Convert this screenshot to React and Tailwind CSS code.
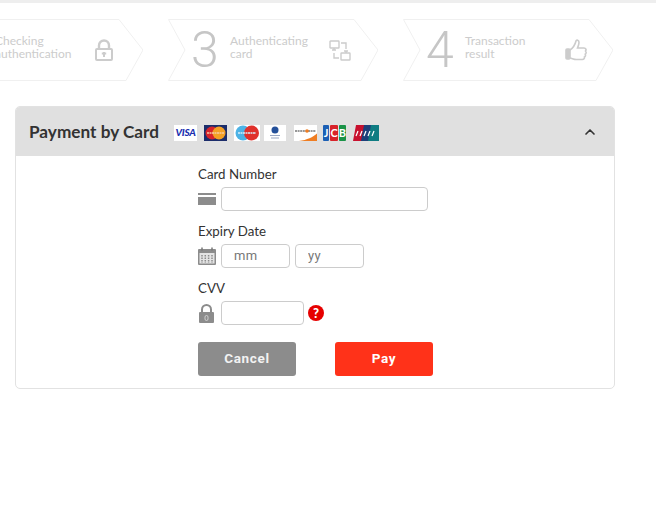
import React from 'react';
import { ChevronUp } from 'lucide-react';

const LockIcon = () => (
    <svg width="18" height="22" viewBox="0 0 18 22" fill="none">
        <path d="M4 10V6.500a5 5 0 0 1 10 0V10" stroke="#ccc" strokeWidth="2.400" />
        <rect x="1" y="10" width="16" height="11" rx="1" stroke="#ccc" strokeWidth="2" fill="#fff" />
        <path d="M9 13v5M6.800 14.600h4.400" stroke="#ccc" strokeWidth="2" />
    </svg>
);

const NodesIcon = () => (
    <svg className="mt-[2px] -ml-px" width="22" height="22" viewBox="0 0 22 22" fill="none" stroke="#ccc" strokeWidth="1.400">
        <rect x="1" y="1" width="9" height="7" rx="0.500" />
        <rect x="12" y="13" width="9" height="7" rx="0.500" />
        <path d="M5 8v2M3 10h4M17 13v-2M15 11h4" />
        <path d="M12 3h5v6M10 18H5v-5" />
    </svg>
);

const ThumbIcon = () => (
    <svg width="22" height="24" viewBox="0 0 22 24" fill="none" stroke="#ccc" strokeWidth="1.600">
        <rect x="1" y="11" width="4" height="10" rx="1" fill="#ccc" />
        <path d="M5 12c3-2 5-5 6-9 .4-1.500 3-1 3 1.500 0 2-1 4-1.500 5.500H19c2 0 2.500 2 1.500 3 1 1 .8 2.500-.3 3.200.6 1 .3 2.300-.8 2.800.3 1.500-.6 2.500-2 2.500h-6c-2.500 0-4-1-6.400-1.500" />
    </svg>
);

const steps = [
    { label: ['Checking', 'authentication'], icon: LockIcon },
    { num: '3', label: ['Authenticating', 'card'], icon: NodesIcon },
    { num: '4', label: ['Transaction', 'result'], icon: ThumbIcon },
];

const Step = ({ num, label, icon: Icon }) => (
    <div className="relative flex h-[62px] w-[210px] shrink-0 items-center">
        <svg className="absolute inset-0" width="210" height="62" viewBox="0 0 210 62" fill="none">
            <path d="M0.500 .5H186L210 31L193 61.500H.5L17 31Z" stroke="#f0f0f0" />
        </svg>
        <span className="relative h-[52px] w-[62px] pl-[23px] font-['Roboto',sans-serif] text-[50px] leading-[52px] font-light text-[#c6c6c6]">{num}</span>
        <div className="relative mb-[6px] w-[100px] text-xs leading-[13px] text-[#ccc]">
            {label.map((line) => (
                <div key={line}>{line}</div>
            ))}
        </div>
        <div className="relative">
            <Icon />
        </div>
    </div>
);

const LogoBox = ({ className, children }) => (
    <div className={`flex h-4 items-center justify-center overflow-hidden ${className}`}>{children}</div>
);

const cardLogos = (
    <div className="mt-[2px] ml-[15px] flex items-center">
        <LogoBox className="w-[23px] bg-white">
            <span className="text-[10px] font-black italic tracking-tight text-[#1a2fb0]">VISA</span>
        </LogoBox>
        <LogoBox className="ml-[7px] w-[23px] bg-[#1c2d6b]">
            <svg width="23" height="16" viewBox="0 0 23 16">
                <circle cx="8" cy="8" r="6.500" fill="#d8232a" />
                <circle cx="15" cy="8" r="6.500" fill="#f4a024" />
                <path d="M3 8h17" stroke="#f6c9a0" strokeWidth="1.500" strokeDasharray="2 .5" />
            </svg>
        </LogoBox>
        <LogoBox className="ml-[7px] w-[26px] bg-white">
            <svg width="26" height="16" viewBox="0 0 26 16">
                <circle cx="9" cy="8" r="7.500" fill="#4db3e6" />
                <circle cx="17.500" cy="8" r="7.500" fill="#e0312c" />
                <path d="M4 8h18" stroke="#d6eefa" strokeWidth="1.500" strokeDasharray="2 .5" />
            </svg>
        </LogoBox>
        <LogoBox className="ml-[4px] w-[22px] bg-white">
            <svg width="22" height="16" viewBox="0 0 22 16">
                <circle cx="11" cy="5" r="3.500" fill="#24509a" />
                <path d="M6 10.500h10M7 13h8" stroke="#9aa8c4" strokeWidth="1.200" />
            </svg>
        </LogoBox>
        <LogoBox className="ml-[8px] w-[23px] bg-white">
            <svg width="23" height="16" viewBox="0 0 23 16">
                <path d="M1 6h21" stroke="#777" strokeWidth="1.500" strokeDasharray="2 .6" />
                <circle cx="13" cy="6" r="1.800" fill="#ef7d22" />
                <path d="M5 16C13 15 19 12 23 8.500V16Z" fill="#ef7d22" />
            </svg>
        </LogoBox>
        <div className="ml-[6px] flex h-4 w-[23px] gap-px overflow-hidden text-center text-[11px] leading-4 font-bold text-white">
            <span className="flex-1 rounded-[1px] bg-[#1b5fb4]">J</span>
            <span className="flex-1 rounded-[1px] bg-[#d8232a]">C</span>
            <span className="flex-1 rounded-[1px] bg-[#1a9347]">B</span>
        </div>
        <LogoBox className="ml-[7px] w-[26px]">
            <svg width="26" height="16" viewBox="0 0 26 16">
                <path d="M3 0h9L9 16H0Z" fill="#c8102e" />
                <path d="M11 0h9l-3 16H8Z" fill="#1d3f7a" />
                <path d="M18 0h8v16h-11Z" fill="#0f7c82" />
                <path d="M3 11l2-5M7 11l2-5M11 11l2-5M15 11l2-5M19 11l2-5" stroke="#fff" strokeWidth="1.200" />
            </svg>
        </LogoBox>
    </div>
);

const inputClass = 'h-6 rounded-[4px] border border-[#ccc] bg-white pb-px pl-3 font-[\'Roboto\',sans-serif] text-[13px] tracking-wide text-[#777] outline-none placeholder:text-[#777]';

const Field = ({ label, icon, children }) => (
    <div>
        <div className="h-[19px] text-[13.300px] leading-[19px] text-[#333]">{label}</div>
        <div className="mt-[3px] flex h-6 items-center">
            <div className="flex w-[23px] shrink-0 items-center">{icon}</div>
            {children}
        </div>
    </div>
);

const App = () => (
    <div className="min-h-[523px] w-[656px] overflow-hidden bg-white font-['Lato',sans-serif]">
        <div className="h-[3px] bg-[#eee]" />

        <div className="mt-4 ml-[-67px] flex gap-[25px]">
            {steps.map((step) => (
                <Step key={step.label[0]} {...step} />
            ))}
        </div>

        <div className="mt-[25px] ml-[15px] w-[600px] overflow-hidden rounded-[5px] border border-[#e2e2e2]">
            <div className="flex h-[49px] items-center bg-[#e0e0e0] pr-4 pl-[13px]">
                <h2 className="text-[17.200px] font-bold text-[#333]">Payment by Card</h2>
                {cardLogos}
                <ChevronUp className="ml-auto h-4 w-4 text-[#333]" strokeWidth={2.500} />
            </div>

            <div className="h-[232px] pt-[9px] pl-[182px]">
                <div className="flex flex-col gap-[11px]">
                    <Field
                        label="Card Number"
                        icon={
                            <svg width="18" height="12" viewBox="0 0 18 12">
                                <rect y="0" width="18" height="2" fill="#8c8c8c" />
                                <rect y="4" width="18" height="8" fill="#8c8c8c" />
                            </svg>
                        }
                    >
                        <input className={`${inputClass} w-[207px]`} />
                    </Field>
                    <Field
                        label="Expiry Date"
                        icon={
                            <svg width="18" height="18" viewBox="0 0 18 18">
                                <rect y="2" width="18" height="16" rx="1" fill="#8c8c8c" />
                                <rect x="1.500" y="6" width="15" height="10.500" fill="#e4e4e4" />
                                <path d="M4 .5v3M14 .5v3" stroke="#777" strokeWidth="1.500" />
                                <path d="M4 8v8M7.300 8v8M10.600 8v8M14 8v8" stroke="#8c8c8c" strokeWidth="1.500" strokeDasharray="1.500 1" />
                            </svg>
                        }
                    >
                        <input className={`${inputClass} w-[69px]`} placeholder="mm" />
                        <input className={`${inputClass} ml-[5px] w-[69px]`} placeholder="yy" />
                    </Field>
                    <Field
                        label="CVV"
                        icon={
                            <svg className="ml-[1px]" width="15" height="19" viewBox="0 0 15 19">
                                <path d="M3 9V5.500a4.500 4.500 0 0 1 9 0V9" fill="none" stroke="#8c8c8c" strokeWidth="2" />
                                <rect y="8" width="15" height="11" rx="1" fill="#8c8c8c" />
                                <rect x="6" y="11.500" width="3" height="5" rx="1.500" fill="none" stroke="#ddd" strokeWidth=".8" />
                            </svg>
                        }
                    >
                        <input className={`${inputClass} w-[83px]`} />
                        <span className="ml-[4px] flex h-4 w-4 items-center justify-center rounded-full bg-[#e60000] text-[13px] leading-none font-black text-white">?</span>
                    </Field>
                </div>

                <div className="mt-[17px] flex gap-[39px] font-['Roboto',sans-serif] text-[13.500px] font-bold tracking-[.7px] text-white">
                    <button className="h-[34px] w-[98px] rounded-[3px] bg-[#8c8c8c] pb-px text-[#f2f2f2]">Cancel</button>
                    <button className="h-[34px] w-[98px] rounded-[3px] bg-[#ff3219] pb-px">Pay</button>
                </div>
            </div>
        </div>
    </div>
);

export default App;
